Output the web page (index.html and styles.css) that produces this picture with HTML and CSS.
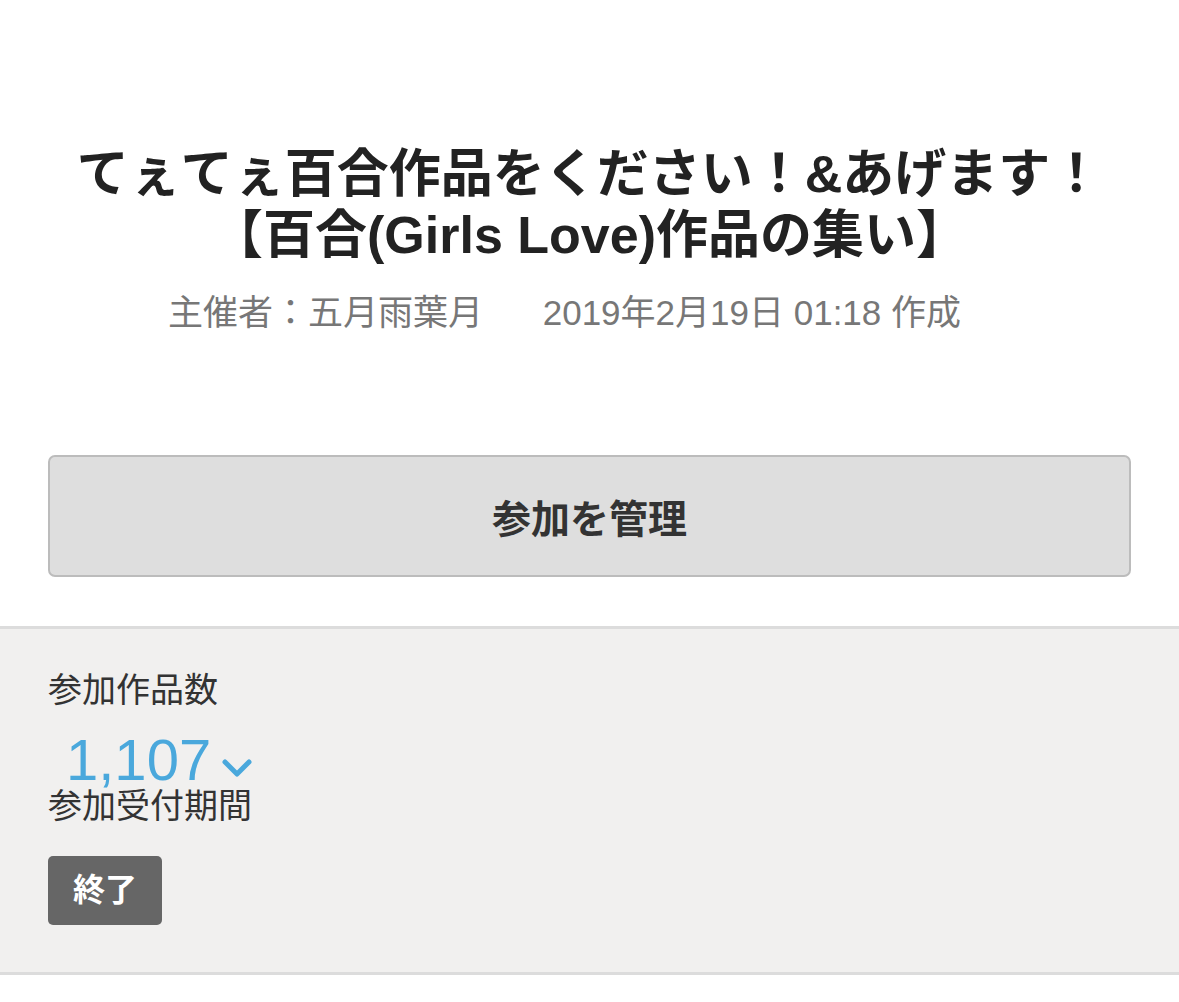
FILE: index.html
```html
<!DOCTYPE html>
<html lang="ja">
<head>
<meta charset="UTF-8">
<title>てぇてぇ百合作品をください！&amp;あげます！</title>
<link rel="stylesheet" href="styles.css">
</head>
<body>
<div class="header">
  <h1 class="title">てぇてぇ百合作品をください！&amp;あげます！<br>【百合(Girls Love)作品の集い】</h1>
  <p class="meta">
    <span class="owner">主催者：五月雨葉月</span>
    <span class="created">2019年2月19日 01:18 作成</span>
  </p>
</div>
<div class="wrapper">
  <button type="button" class="manage">参加を管理</button>
</div>
<div class="summary">
  <p class="label">参加作品数</p>
  <p class="count">1,107<svg class="chevron" width="30" height="20" viewBox="0 0 30 20">
      <polyline points="3,4 15,16 27,4" fill="none" stroke="#4aa8dc" stroke-width="5" stroke-linecap="round" stroke-linejoin="round"/>
    </svg></p>
  <p class="label period">参加受付期間</p>
  <span class="status">終了</span>
</div>
</body>
</html>
```

FILE: styles.css
```css
body {
  margin: 0;
  background: #fff;
  color: #222;
  font-family: "Liberation Sans", "Noto Sans CJK JP", sans-serif;
}
p {
  margin: 0;
}
.header {
  text-align: center;
  padding-top: 144px;
}
.title {
  margin: 0;
  font-size: 52px;
  line-height: 61px;
  font-weight: bold;
  color: #222;
}
.meta {
  margin-top: 27px;
  padding-right: 50px;
  font-size: 35px;
  line-height: 40px;
  color: #777;
}
.owner {
  margin-right: 50px;
}
.wrapper {
  padding: 122px 48px 49px;
}
button.manage {
  display: block;
  width: 100%;
  height: 122px;
  background: #dedede;
  border: 2px solid #bcbcbc;
  border-radius: 7px;
  font-family: inherit;
  font-size: 39px;
  font-weight: bold;
  color: #333;
}
.summary {
  background: #f1f0ef;
  border-top: 3px solid #dcdcdc;
  border-bottom: 3px solid #dcdcdc;
  padding: 43px 48px 47px;
}
.label {
  font-size: 34px;
  line-height: 36px;
  color: #333;
}
.count {
  margin: 27px 0 0 18px;
  font-size: 58px;
  line-height: 50px;
  color: #4aa8dc;
}
.period {
  margin-top: 3px;
}
.chevron {
  margin-left: 11px;
  vertical-align: 2px;
}
.status {
  display: inline-block;
  margin-top: 32px;
  padding: 12px 25px;
  background: #666;
  border-radius: 5px;
  color: #fff;
  font-size: 32px;
  line-height: 45px;
  font-weight: bold;
}
```
